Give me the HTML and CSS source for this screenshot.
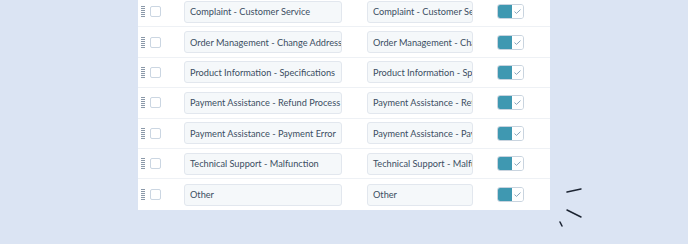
FILE: index.html
```html
<!DOCTYPE html>
<html lang="en">
<head>
  <meta charset="UTF-8">
  <title>Ticket categories</title>
  <link rel="stylesheet" href="styles.css">
</head>
<body>
  <div class="stage">
    <div class="panel">
      <div class="row">
        <span class="handle"></span><span class="check"></span>
        <div class="field wide">Complaint - Customer Service</div>
        <div class="field narrow">Complaint - Customer Service</div>
        <div class="toggle"><span class="on"></span><span class="tick"><svg width="7" height="5" viewBox="0 0 7 5"><path d="M0.5 2.6 L2.5 4.4 L6.5 0.6" /></svg></span></div>
      </div>
      <div class="row">
        <span class="handle"></span><span class="check"></span>
        <div class="field wide">Order Management - Change Address</div>
        <div class="field narrow">Order Management - Change Address</div>
        <div class="toggle"><span class="on"></span><span class="tick"><svg width="7" height="5" viewBox="0 0 7 5"><path d="M0.5 2.6 L2.5 4.4 L6.5 0.6" /></svg></span></div>
      </div>
      <div class="row">
        <span class="handle"></span><span class="check"></span>
        <div class="field wide">Product Information - Specifications</div>
        <div class="field narrow">Product Information - Specifications</div>
        <div class="toggle"><span class="on"></span><span class="tick"><svg width="7" height="5" viewBox="0 0 7 5"><path d="M0.5 2.6 L2.5 4.4 L6.5 0.6" /></svg></span></div>
      </div>
      <div class="row">
        <span class="handle"></span><span class="check"></span>
        <div class="field wide">Payment Assistance - Refund Process</div>
        <div class="field narrow">Payment Assistance - Refund Process</div>
        <div class="toggle"><span class="on"></span><span class="tick"><svg width="7" height="5" viewBox="0 0 7 5"><path d="M0.5 2.6 L2.5 4.4 L6.5 0.6" /></svg></span></div>
      </div>
      <div class="row">
        <span class="handle"></span><span class="check"></span>
        <div class="field wide">Payment Assistance - Payment Error</div>
        <div class="field narrow">Payment Assistance - Payment Error</div>
        <div class="toggle"><span class="on"></span><span class="tick"><svg width="7" height="5" viewBox="0 0 7 5"><path d="M0.5 2.6 L2.5 4.4 L6.5 0.6" /></svg></span></div>
      </div>
      <div class="row">
        <span class="handle"></span><span class="check"></span>
        <div class="field wide">Technical Support - Malfunction</div>
        <div class="field narrow">Technical Support - Malfunction</div>
        <div class="toggle"><span class="on"></span><span class="tick"><svg width="7" height="5" viewBox="0 0 7 5"><path d="M0.5 2.6 L2.5 4.4 L6.5 0.6" /></svg></span></div>
      </div>
      <div class="row last">
        <span class="handle"></span><span class="check"></span>
        <div class="field wide">Other</div>
        <div class="field narrow">Other</div>
        <div class="toggle"><span class="on"></span><span class="tick"><svg width="7" height="5" viewBox="0 0 7 5"><path d="M0.5 2.6 L2.5 4.4 L6.5 0.6" /></svg></span></div>
      </div>
    </div>
    <svg class="sparks" width="30" height="44" viewBox="0 0 30 44">
      <line x1="8" y1="8" x2="22" y2="5" />
      <line x1="8" y1="26" x2="22" y2="33" />
      <line x1="1" y1="38" x2="3" y2="42" />
    </svg>
  </div>
</body>
</html>
```

FILE: styles.css
```css
* {
  box-sizing: border-box;
}

body {
  margin: 0;
  width: 688px;
  height: 244px;
  overflow: hidden;
  background: #dbe4f3;
  font-family: 'Lato', 'Open Sans', sans-serif;
  color: #3b4e62;
}

.stage {
  display: flex;
  align-items: flex-start;
  padding-left: 138px;
}

.panel {
  width: 412px;
  margin-top: -3px;
  background: #fff;
}

.row {
  height: 30.4px;
  display: flex;
  align-items: center;
  border-bottom: 1px solid #eef1f5;
}

.row.last {
  border-bottom: none;
}

.handle {
  width: 4px;
  height: 11px;
  margin-left: 3px;
  background: repeating-linear-gradient(to bottom, #8a98a8 0 1px, transparent 1px 2px);
}

.check {
  width: 11px;
  height: 11px;
  margin-left: 5px;
  border: 1px solid #cbd6e2;
  border-radius: 2px;
  background: #fff;
}

.field {
  height: 22px;
  display: flex;
  align-items: center;
  padding: 0 5px;
  font-size: 9.2px;
  white-space: nowrap;
  overflow: hidden;
  background: #f5f8fa;
  border: 1px solid #e2e7ee;
  border-radius: 3px;
}

.wide {
  width: 158px;
  margin-left: 23px;
}

.narrow {
  width: 106px;
  margin-left: 25px;
}

.toggle {
  display: flex;
  width: 27px;
  height: 15px;
  margin-left: 24px;
  border: 1px solid #c9d4df;
  border-radius: 3px;
  overflow: hidden;
}

.toggle .on {
  width: 14px;
  background: #3f98b1;
}

.toggle .tick {
  flex: 1;
  display: flex;
  align-items: center;
  justify-content: center;
  background: #fff;
}

.toggle .tick path {
  fill: none;
  stroke: #7a9cb4;
  stroke-width: 0.9;
}

.sparks {
  margin-left: 9px;
  margin-top: 184px;
}

.sparks line {
  stroke: #1d2533;
  stroke-width: 1.5;
  stroke-linecap: round;
}
```
